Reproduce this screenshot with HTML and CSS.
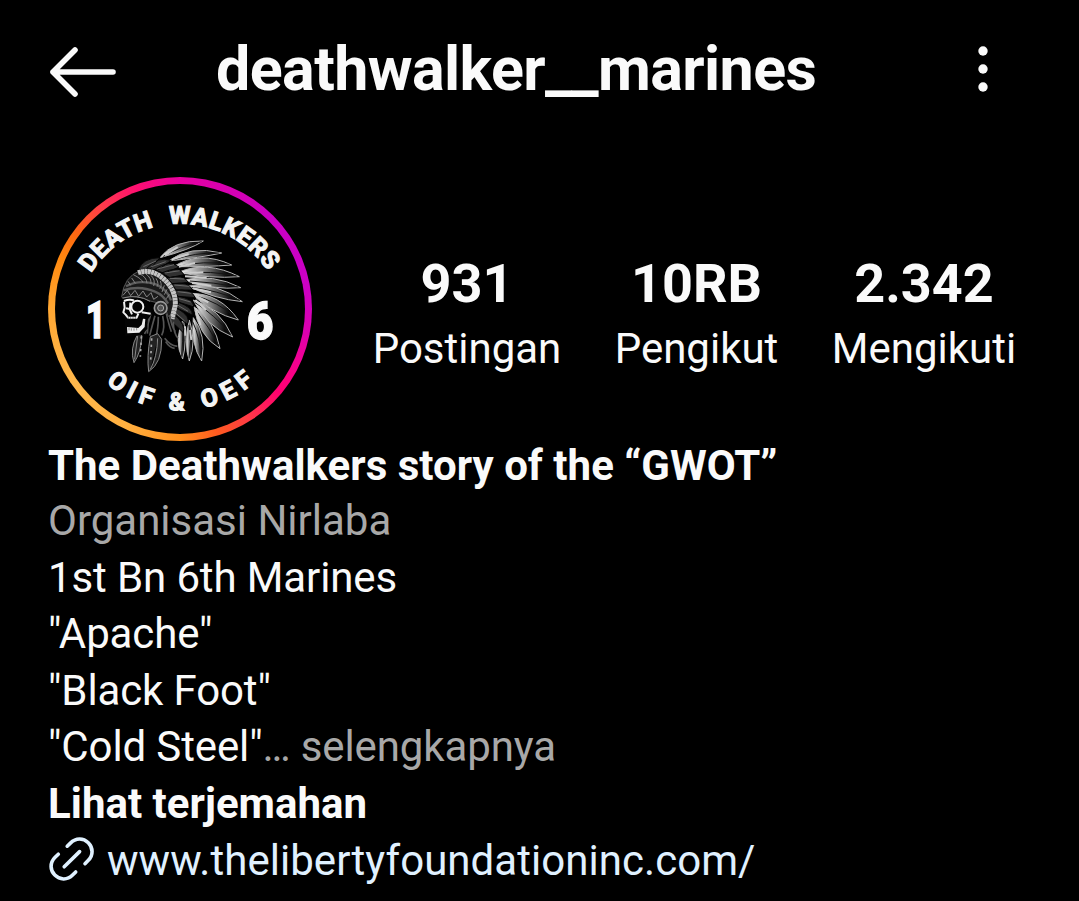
FILE: index.html
```html
<!DOCTYPE html>
<html lang="id">
<head>
<meta charset="utf-8">
<title>deathwalker__marines</title>
<link rel="stylesheet" href="styles.css">
</head>
<body>
<header class="topbar">
  <svg class="back" viewBox="0 0 68 52" aria-label="Kembali"><path d="M26 4 4 26l22 22M4 26h60"/></svg>
  <h1 class="username">deathwalker__marines</h1>
  <svg class="more" viewBox="0 0 12 48"><circle cx="6" cy="6" r="4.7"/><circle cx="6" cy="24" r="4.7"/><circle cx="6" cy="42" r="4.7"/></svg>
</header>
<main>
  <section class="summary">
    <div class="avatar">
      <svg class="emblem" viewBox="45 42 750 750">
        <defs>
          <path id="arc-bottom" d="M85 391A335 330 0 0 0 755 391"/>
          <linearGradient id="plume" x1="0" x2="1"><stop offset="0" stop-color="#fff"/><stop offset=".45" stop-color="#777"/><stop offset=".8" stop-color="#080808"/></linearGradient>
        </defs>
        <path id="top-line" d="M129 597A315 315 0 1 1 711 597" fill="none"/>
        <text class="motto"><textPath href="#top-line" startOffset="49.7%" text-anchor="middle" textLength="630">DEATH WALKERS</textPath></text>
        <text class="motto lower"><textPath href="#arc-bottom" startOffset="50%" text-anchor="middle" textLength="484">OIF &amp; OEF</textPath></text>
        <text class="numeral" x="137" y="503" textLength="60" lengthAdjust="spacingAndGlyphs">1</text>
        <text class="numeral" x="620" y="506" textLength="80" lengthAdjust="spacingAndGlyphs">6</text>
        <g transform="translate(210 165)">
          <g class="feathers">
            <path d="M150 98Q190 45 280 48Q240 74 150 98Z"/>
            <path d="M175 108Q240 60 335 84Q270 98 175 108Z"/>
            <path d="M190 125Q270 75 365 120Q290 126 190 125Z"/>
            <path d="M205 142Q290 105 388 155Q300 162 205 142Z"/>
            <path d="M220 165Q310 145 392 188Q310 196 220 165Z"/>
            <path d="M232 183Q320 170 397 230Q315 222 232 183Z"/>
            <path d="M242 205Q330 205 385 285Q305 264 242 205Z"/>
            <path d="M250 225Q330 250 368 336Q285 302 250 225Z"/>
            <path d="M252 245Q315 290 330 371Q265 332 252 245Z"/>
            <path d="M250 278Q290 330 275 408Q242 360 250 278Z"/>
            <path d="M238 285Q260 350 238 408Q220 355 238 285Z"/>
            <path d="M220 280Q232 350 218 402Q190 350 220 280Z"/>
          </g>
          <path class="quills" d="M160 94Q210 65 275 50M190 105Q255 82 328 84M205 124Q280 106 358 118M225 145Q300 136 380 153M240 168Q310 172 385 186M245 187Q320 196 390 226M250 210Q325 230 380 280M254 232Q315 270 362 328M255 252Q300 310 327 363M248 290Q272 340 272 400M237 300Q246 350 237 400M220 300Q218 350 215 395"/>
          <path class="highlights" d="M165 91l38-25M188 103l48-16M205 125l50-11M222 145l58-3M225 154l65 4M246 174l58 8M248 190l55 12M253 210l42 22M256 225l32 30M257 250l14 50M225 304l1 28M240 315l4 30"/>
          <g class="inner">
            <path d="M85 135Q98 98 150 98L120 132ZM108 132Q145 92 184 106L142 136ZM132 134Q180 102 207 126L163 145ZM154 144Q208 120 222 149L180 158ZM171 159Q220 145 235 172L188 177ZM185 176Q235 168 248 195L198 195ZM192 196Q245 190 256 218L204 214ZM203 214Q250 220 252 246L207 232ZM206 232Q249 248 247 270L202 250ZM202 250Q245 275 232 298L194 268ZM193 268Q228 300 220 323L181 286Z"/>
            <path d="M100 125l38-17M122 126l45-16M142 132l50-13M164 144l45-7M180 160l43 2M193 180l45 4M203 200l41 5M207 221l35 10M204 241l30 18M196 263l28 25"/>
          </g>
          <path class="cap" d="M35 215Q42 155 90 137Q145 137 175 176Q196 206 190 270L174 274Q168 234 120 228Q80 207 39 221Z"/>
          <path class="beads" d="M48 184Q88 162 138 178Q172 193 183 226M40 196Q90 180 135 200Q160 210 174 236"/>
          <path class="stripes" d="M70 149q25 12 29 24M88 146q22 10 23 29M107 146q18 13 16 31M123 151q14 14 8 32M138 160q10 17 3 25M151 168q6 15-2 23M163 181l-7 20M171 193l-8 16M178 208l-9 13M54 169l8 12M65 159l11 16"/>
          <path class="zigzag" d="M39 211l13-15 10 16 13-16 11 18 13-16 11 18 13-13 8 20 13-9M38 219Q82 207 120 229"/>
          <path class="band" d="M84 143Q120 131 153 155Q198 190 196 240L186 282"/>
          <path class="fringe" d="M124 262q-10 38-20 65M135 272q-10 35-16 60M145 275q0 36-8 62M158 273q8 37-3 58M169 266q8 35 15 54M179 270q5 32 17 50M190 290q0 32 14 50M116 278l-4 48M164 340q20 25 38 23M167 350q12 19 27 20"/>
          <g class="pendants">
            <path d="M82 330Q58 372 72 413Q93 383 96 332ZM83 332L74 403M121 335Q110 395 116 440Q156 415 155 343L143 326ZM143 340Q141 398 121 433"/>
            <path class="dots" d="M94 334l-3 61M125 340l-3 65"/>
          </g>
          <circle class="rosette" cx="152" cy="249" r="19"/>
          <circle class="rosette-core" cx="152" cy="249" r="9"/>
          <path class="face" d="M36 222Q70 211 108 225L122 250 128 264 112 285 112 312 92 332 45 332 44 285 34 262Z"/>
          <circle class="orbit" cx="82" cy="245" r="18"/>
          <path class="bone" d="M42 228Q58 221 72 226M42 230L44 248 40 262 47 269 54 278 80 278 85 266M61 233L60 252M48 250L59 252 66 268M95 262L122 266"/>
          <path class="jaw" d="M51 306L52 325 88 323 104 306 106 282 99 281 95 299 85 309Z"/>
          <path class="teeth" d="M55 273v10M62 274v10M69 274v9M76 273v9M57 308v8M64 310v7M72 310v7M80 309v7"/>
        </g>
      </svg>
    </div>
    <div class="stats">
      <div class="stat"><strong>931</strong><span>Postingan</span></div>
      <div class="stat"><strong>10RB</strong><span>Pengikut</span></div>
      <div class="stat"><strong>2.342</strong><span>Mengikuti</span></div>
    </div>
  </section>
  <section class="bio">
    <p class="name">The Deathwalkers story of the “GWOT”</p>
    <p class="muted">Organisasi Nirlaba</p>
    <p class="line">1st Bn 6th Marines</p>
    <p class="line">"Apache"</p>
    <p class="line">"Black Foot"</p>
    <p class="line">"Cold Steel"<span class="muted">… selengkapnya</span></p>
    <p class="translate">Lihat terjemahan</p>
    <a class="link"><svg class="chain" viewBox="0 0 46 46"><path d="M18.2 9.2l3.2-3.1C27 .5 34.5 1 39.3 5.8s5.3 12.3-.2 17.8L36 26.7M9.3 17.2l-3.2 3.1C.6 25.8 1 33.3 5.8 38.1s12.3 5.5 17.8 0l3.1-3.1M15.2 29.8 30.6 14.6"/></svg><span>www.thelibertyfoundationinc.com/</span></a>
  </section>
</main>
</body>
</html>
```

FILE: styles.css
```css
* { box-sizing: border-box; }
body {
  margin: 0;
  height: 901px;
  overflow: hidden;
  background: #000;
  color: #fafafa;
  font-family: Roboto, "Liberation Sans", sans-serif;
}
h1, p { margin: 0; }
.topbar {
  display: flex;
  align-items: center;
  height: 177px;
  padding: 0 90px 35px 49px;
}
.back { width: 68px; height: 52px; margin-top: 2px; flex: none; fill: none; stroke: #fafafa; stroke-width: 5.6; stroke-linecap: round; stroke-linejoin: round; }
.username { margin: -4px 0 0 99px; font-size: 61px; line-height: 72px; font-weight: 700; letter-spacing: -.6px; white-space: nowrap; }
.more { width: 12px; height: 48px; margin: -4px 0 0 auto; fill: #fafafa; }
.summary { display: flex; height: 264px; padding-left: 48px; }
.avatar {
  flex: none;
  width: 264px;
  height: 264px;
  padding: 7px;
  border-radius: 50%;
  background: conic-gradient(#e800a0 0deg, #d800b0 20deg, #c900c4 45deg, #cc00c4 80deg, #dc00b0 100deg, #f60090 115deg, #ff0070 130deg, #ff3a45 148deg, #ff5a20 163deg, #ff8f1c 180deg, #ffb040 205deg, #ffb84c 235deg, #ffa733 270deg, #ff8a10 292deg, #ff6a10 305deg, #ff3d48 322deg, #ff0f70 340deg, #e800a0 360deg);
}
.emblem { display: block; width: 250px; height: 250px; border-radius: 50%; background: #000; }
.motto { fill: #f4f4f4; stroke: #f4f4f4; stroke-width: 3.5; font-size: 74px; font-weight: 700; word-spacing: 24px; }
.lower { font-size: 74px; word-spacing: 0; }
.numeral { fill: #fafafa; stroke: #fafafa; stroke-width: 4; font-size: 158px; font-weight: 900; }
.feathers { fill: url(#plume); stroke: #b4b4b4; stroke-width: 3; }
.quills, .highlights, .beads, .stripes, .zigzag, .band, .fringe { fill: none; }
.quills { stroke: #151515; stroke-width: 3; }
.highlights { stroke: #ccc; stroke-width: 6; }
.inner { fill: #303030; stroke: #050505; stroke-width: 3; }
.inner path + path { stroke: #6c6c6c; }
.cap { fill: #1a1a1a; stroke: #777; stroke-width: 2; }
.beads { stroke: #5c5c5c; stroke-width: 7; }
.stripes { stroke: #858585; stroke-width: 3; }
.zigzag { stroke: #888; stroke-width: 3; }
.band { stroke: #c4c4c4; stroke-width: 15; stroke-dasharray: 9 1; }
.fringe { stroke: #555; stroke-width: 5; }
.pendants { fill: #222; stroke: #888; stroke-width: 3; }
.dots { stroke: #aaa; stroke-width: 5; stroke-dasharray: 7 12; }
.rosette { fill: #333; stroke: #999; stroke-width: 5; }
.rosette-core { fill: #555; stroke: #aaa; stroke-width: 3; }
.face { fill: #030303; }
.orbit { fill: #030303; stroke: #f0f0f0; stroke-width: 6; }
.bone { fill: none; stroke: #f0f0f0; stroke-width: 6; stroke-linejoin: round; }
.jaw { fill: #ececec; }
.teeth { fill: none; stroke: #333; stroke-width: 1.5; }
.stats {
  display: grid;
  grid-template-columns: 190px 164px 184px;
  column-gap: 53px;
  padding: 75px 0 0 60px;
}
.stat { display: flex; flex-direction: column; align-items: center; white-space: nowrap; }
.stat:nth-child(2) { margin-left: -1px; }
.stat strong { font-size: 54px; line-height: 64px; font-weight: 700; }
.stat span { font-size: 42px; line-height: 65px; }
.bio { padding: 0 48px; font-size: 42px; line-height: 56.4px; white-space: nowrap; margin-top: -4px; }
.bio p { height: 56.4px; }
.name, .translate { font-weight: 700; }
.bio .name, .bio .translate { padding-top: 1px; letter-spacing: .02px; }
.muted { color: #a8a8a8; }
.line { letter-spacing: -.12px; }
.link { display: flex; align-items: center; padding-top: 1px; color: #e0f1ff; }
.link span { letter-spacing: .05px; }
.chain { width: 46px; height: 46px; margin: -2px 12px 0 1px; fill: none; stroke: currentColor; stroke-width: 3.6; stroke-linecap: round; overflow: visible; }
```
